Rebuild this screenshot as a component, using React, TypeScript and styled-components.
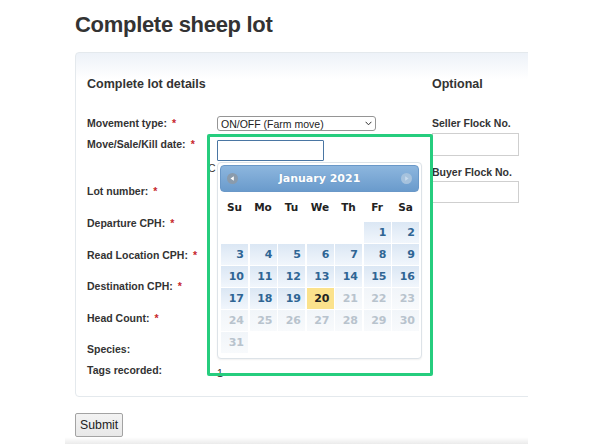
import React from "react";
import styled, { createGlobalStyle } from "styled-components";

type DayState = "normal" | "today" | "disabled";

const GlobalStyle = createGlobalStyle`
  html, body {
    margin: 0;
    padding: 0;
    background: #fff;
  }
  body {
    font-family: "Liberation Sans", Arial, sans-serif;
    color: #333;
  }
`;

const Page = styled.div`
  margin-left: 65px;
  width: 463px;
  height: 444px;
  overflow: hidden;
  display: flex;
  flex-direction: column;
`;

const Main = styled.main`
  padding-left: 10px;
`;

const Title = styled.h1`
  margin: 12px 0 14px;
  font-size: 22px;
  line-height: 26px;
  letter-spacing: -0.3px;
  font-weight: 700;
  color: #333;
`;

const Panel = styled.section`
  width: 560px;
  box-sizing: border-box;
  border: 1px solid #e4e9ed;
  border-radius: 4px;
  background: linear-gradient(#edf2f8, #fff 26px);
  padding: 24px 0 19px 11px;
  display: grid;
  grid-template-columns: 345px 1fr;
`;

const SectionTitle = styled.h2`
  margin: 0 0 24px;
  font-size: 12.5px;
  line-height: 15px;
  font-weight: 700;
  color: #333;
`;

const Row = styled.div<{ $h: number }>`
  display: grid;
  grid-template-columns: 130px 1fr;
  height: ${(p) => p.$h}px;
`;

const Label = styled.label`
  font-size: 10.5px;
  line-height: 14px;
  font-weight: 700;
  color: #333;
`;

const Required = styled.span`
  color: #c7262c;
  margin-left: 5px;
`;

const Field = styled.div<{ $offset?: number }>`
  position: relative;
  padding-top: ${(p) => p.$offset ?? 0}px;
  font-size: 10.5px;
  line-height: 14px;
  color: #333;
`;

const SelectWrap = styled.div`
  position: relative;
  width: 159px;
`;

const Select = styled.select`
  appearance: none;
  display: block;
  width: 100%;
  height: 15px;
  box-sizing: border-box;
  margin: 0;
  padding: 0 0 0 3px;
  border: 1px solid #959595;
  border-radius: 3px;
  background: #fff;
  font: 10.5px "Liberation Sans", Arial, sans-serif;
  color: #222;
`;

const Chevron = styled.svg`
  position: absolute;
  right: 4px;
  top: 5px;
  pointer-events: none;
`;

const DateInput = styled.input`
  display: block;
  width: 107px;
  height: 21px;
  box-sizing: border-box;
  margin: 3px 0 0;
  border: 1px solid #4a76a3;
  border-radius: 1px;
  outline: none;
  background: #fff;
`;

const StrayText = styled.div`
  margin: 0 0 0 -9px;
`;

const Picker = styled.div`
  position: absolute;
  top: 25px;
  left: 0;
  width: 205px;
  box-sizing: border-box;
  padding: 2px 2px 5px;
  border: 1px solid #dde3e8;
  border-radius: 4px;
  background: #fff;
  box-shadow: 0 1px 2px rgba(0, 0, 0, 0.06);
  font-family: "DejaVu Sans", Verdana, sans-serif;
  z-index: 1;
`;

const PickerHeader = styled.div`
  height: 27px;
  box-sizing: border-box;
  display: flex;
  align-items: center;
  justify-content: space-between;
  padding: 0 6px;
  border: 1px solid #6a98c8;
  border-radius: 4px;
  background: linear-gradient(#8db6de, #6a9bcc);
  color: #fff;
  font-size: 11px;
  font-weight: 700;
`;

const Month = styled.span`
  text-shadow: 0 0 1px rgba(40, 80, 120, 0.3);
`;

const WeekDays = styled.div`
  display: grid;
  grid-template-columns: repeat(7, 1fr);
  column-gap: 1.5px;
  padding-left: 1px;
  height: 30px;
  align-items: center;
  text-align: center;
  font-size: 10.5px;
  font-weight: 700;
  color: #222;
`;

const Days = styled.div`
  display: grid;
  grid-template-columns: repeat(7, 1fr);
  grid-auto-rows: 21px;
  gap: 1px 1.5px;
  padding-left: 1px;
`;

const dayBg: Record<DayState, string> = {
  normal: "linear-gradient(#dbe7f4, #f1f6fc)",
  today: "#fbe28c",
  disabled: "linear-gradient(#f1f5f9, #f8fafc)",
};

const dayColor: Record<DayState, string> = {
  normal: "#2f6594",
  today: "#222",
  disabled: "#b8c3cd",
};

const Day = styled.div<{ $state: DayState }>`
  background: ${(p) => dayBg[p.$state]};
  color: ${(p) => dayColor[p.$state]};
  text-align: right;
  padding-right: 4px;
  line-height: 21px;
  font-size: 11px;
  font-weight: 700;
`;

const Highlight = styled.div`
  position: absolute;
  left: -10px;
  top: -3px;
  width: 226px;
  height: 242px;
  box-sizing: border-box;
  border: 3px solid #26cd7e;
  border-radius: 2px;
  pointer-events: none;
  z-index: 2;
`;

const Aside = styled.div`
  display: flex;
  flex-direction: column;
`;

const AsideLabel = styled(Label)<{ $gap: number }>`
  display: block;
  margin-bottom: ${(p) => p.$gap}px;
`;

const TextInput = styled.input<{ $h: number }>`
  display: block;
  width: 87px;
  height: ${(p) => p.$h}px;
  box-sizing: border-box;
  margin: 0 0 9px;
  border: 1px solid #cfcfcf;
  background: #fff;
`;

const SubmitButton = styled.button`
  margin-top: 16px;
  height: 24px;
  padding: 0 4px;
  border: 1px solid #a3a3a3;
  border-radius: 2px;
  background: linear-gradient(#f3f3f3, #e8e8e8);
  font: 12.3px "Liberation Sans", Arial, sans-serif;
  color: #222;
`;

const Footer = styled.footer`
  margin-top: auto;
  height: 11px;
  background: linear-gradient(rgba(0, 0, 0, 0), rgba(0, 0, 0, 0.08));
`;

const NavIcon: React.FC<{ dir: "prev" | "next" }> = ({ dir }) => (
  <svg width="11" height="11" viewBox="0 0 11 11">
    <circle cx="5.5" cy="5.5" r="5.5" fill={dir === "prev" ? "#8a9bac" : "#a6c2dd"} />
    {dir === "prev" ? (
      <path d="M3.5 5.5 L6.8 3.3 L6.8 7.7 Z" fill="#fff" />
    ) : (
      <path d="M7.5 5.5 L4.2 3.3 L4.2 7.7 Z" fill="#c8dbee" />
    )}
  </svg>
);

const weekDays = ["Su", "Mo", "Tu", "We", "Th", "Fr", "Sa"];
const leading = 5; // 1 January 2021 is a Friday
const today = 20;

const dayState = (d: number): DayState =>
  d === today ? "today" : d > today ? "disabled" : "normal";

const labels: { text: string; h: number; required?: boolean }[] = [
  { text: "Lot number:", h: 32, required: true },
  { text: "Departure CPH:", h: 32, required: true },
  { text: "Read Location CPH:", h: 31, required: true },
  { text: "Destination CPH:", h: 32, required: true },
  { text: "Head Count:", h: 31, required: true },
  { text: "Species:", h: 21 },
];

const App: React.FC = () => (
  <>
    <GlobalStyle />
    <Page>
      <Main>
        <Title>Complete sheep lot</Title>
        <Panel>
          <div>
            <SectionTitle>Complete lot details</SectionTitle>

            <Row $h={21}>
              <Label>
                Movement type:<Required>*</Required>
              </Label>
              <Field>
                <SelectWrap>
                  <Select defaultValue="onoff">
                    <option value="onoff">ON/OFF (Farm move)</option>
                  </Select>
                  <Chevron width="7" height="5" viewBox="0 0 7 5">
                    <polyline points="0.6,0.8 3.5,3.8 6.4,0.8" fill="none" stroke="#333" strokeWidth="1" />
                  </Chevron>
                </SelectWrap>
              </Field>
            </Row>

            <Row $h={47}>
              <Label>
                Move/Sale/Kill date:<Required>*</Required>
              </Label>
              <Field>
                <DateInput />
                <StrayText>C</StrayText>
                <Picker>
                  <PickerHeader>
                    <NavIcon dir="prev" />
                    <Month>January 2021</Month>
                    <NavIcon dir="next" />
                  </PickerHeader>
                  <WeekDays>
                    {weekDays.map((d) => (
                      <span key={d}>{d}</span>
                    ))}
                  </WeekDays>
                  <Days>
                    {Array.from({ length: leading }, (_, i) => (
                      <span key={`e${i}`} />
                    ))}
                    {Array.from({ length: 31 }, (_, i) => (
                      <Day key={i} $state={dayState(i + 1)}>
                        {i + 1}
                      </Day>
                    ))}
                  </Days>
                </Picker>
                <Highlight />
              </Field>
            </Row>

            {labels.map((l) => (
              <Row key={l.text} $h={l.h}>
                <Label>
                  {l.text}
                  {l.required && <Required>*</Required>}
                </Label>
                <Field />
              </Row>
            ))}

            <Row $h={14}>
              <Label>Tags recorded:</Label>
              <Field $offset={3}>1</Field>
            </Row>
          </div>

          <Aside>
            <SectionTitle>Optional</SectionTitle>
            <AsideLabel $gap={3}>Seller Flock No.</AsideLabel>
            <TextInput $h={23} />
            <AsideLabel $gap={2}>Buyer Flock No.</AsideLabel>
            <TextInput $h={22} />
          </Aside>
        </Panel>
        <SubmitButton type="button">Submit</SubmitButton>
      </Main>
      <Footer />
    </Page>
  </>
);

export default App;
